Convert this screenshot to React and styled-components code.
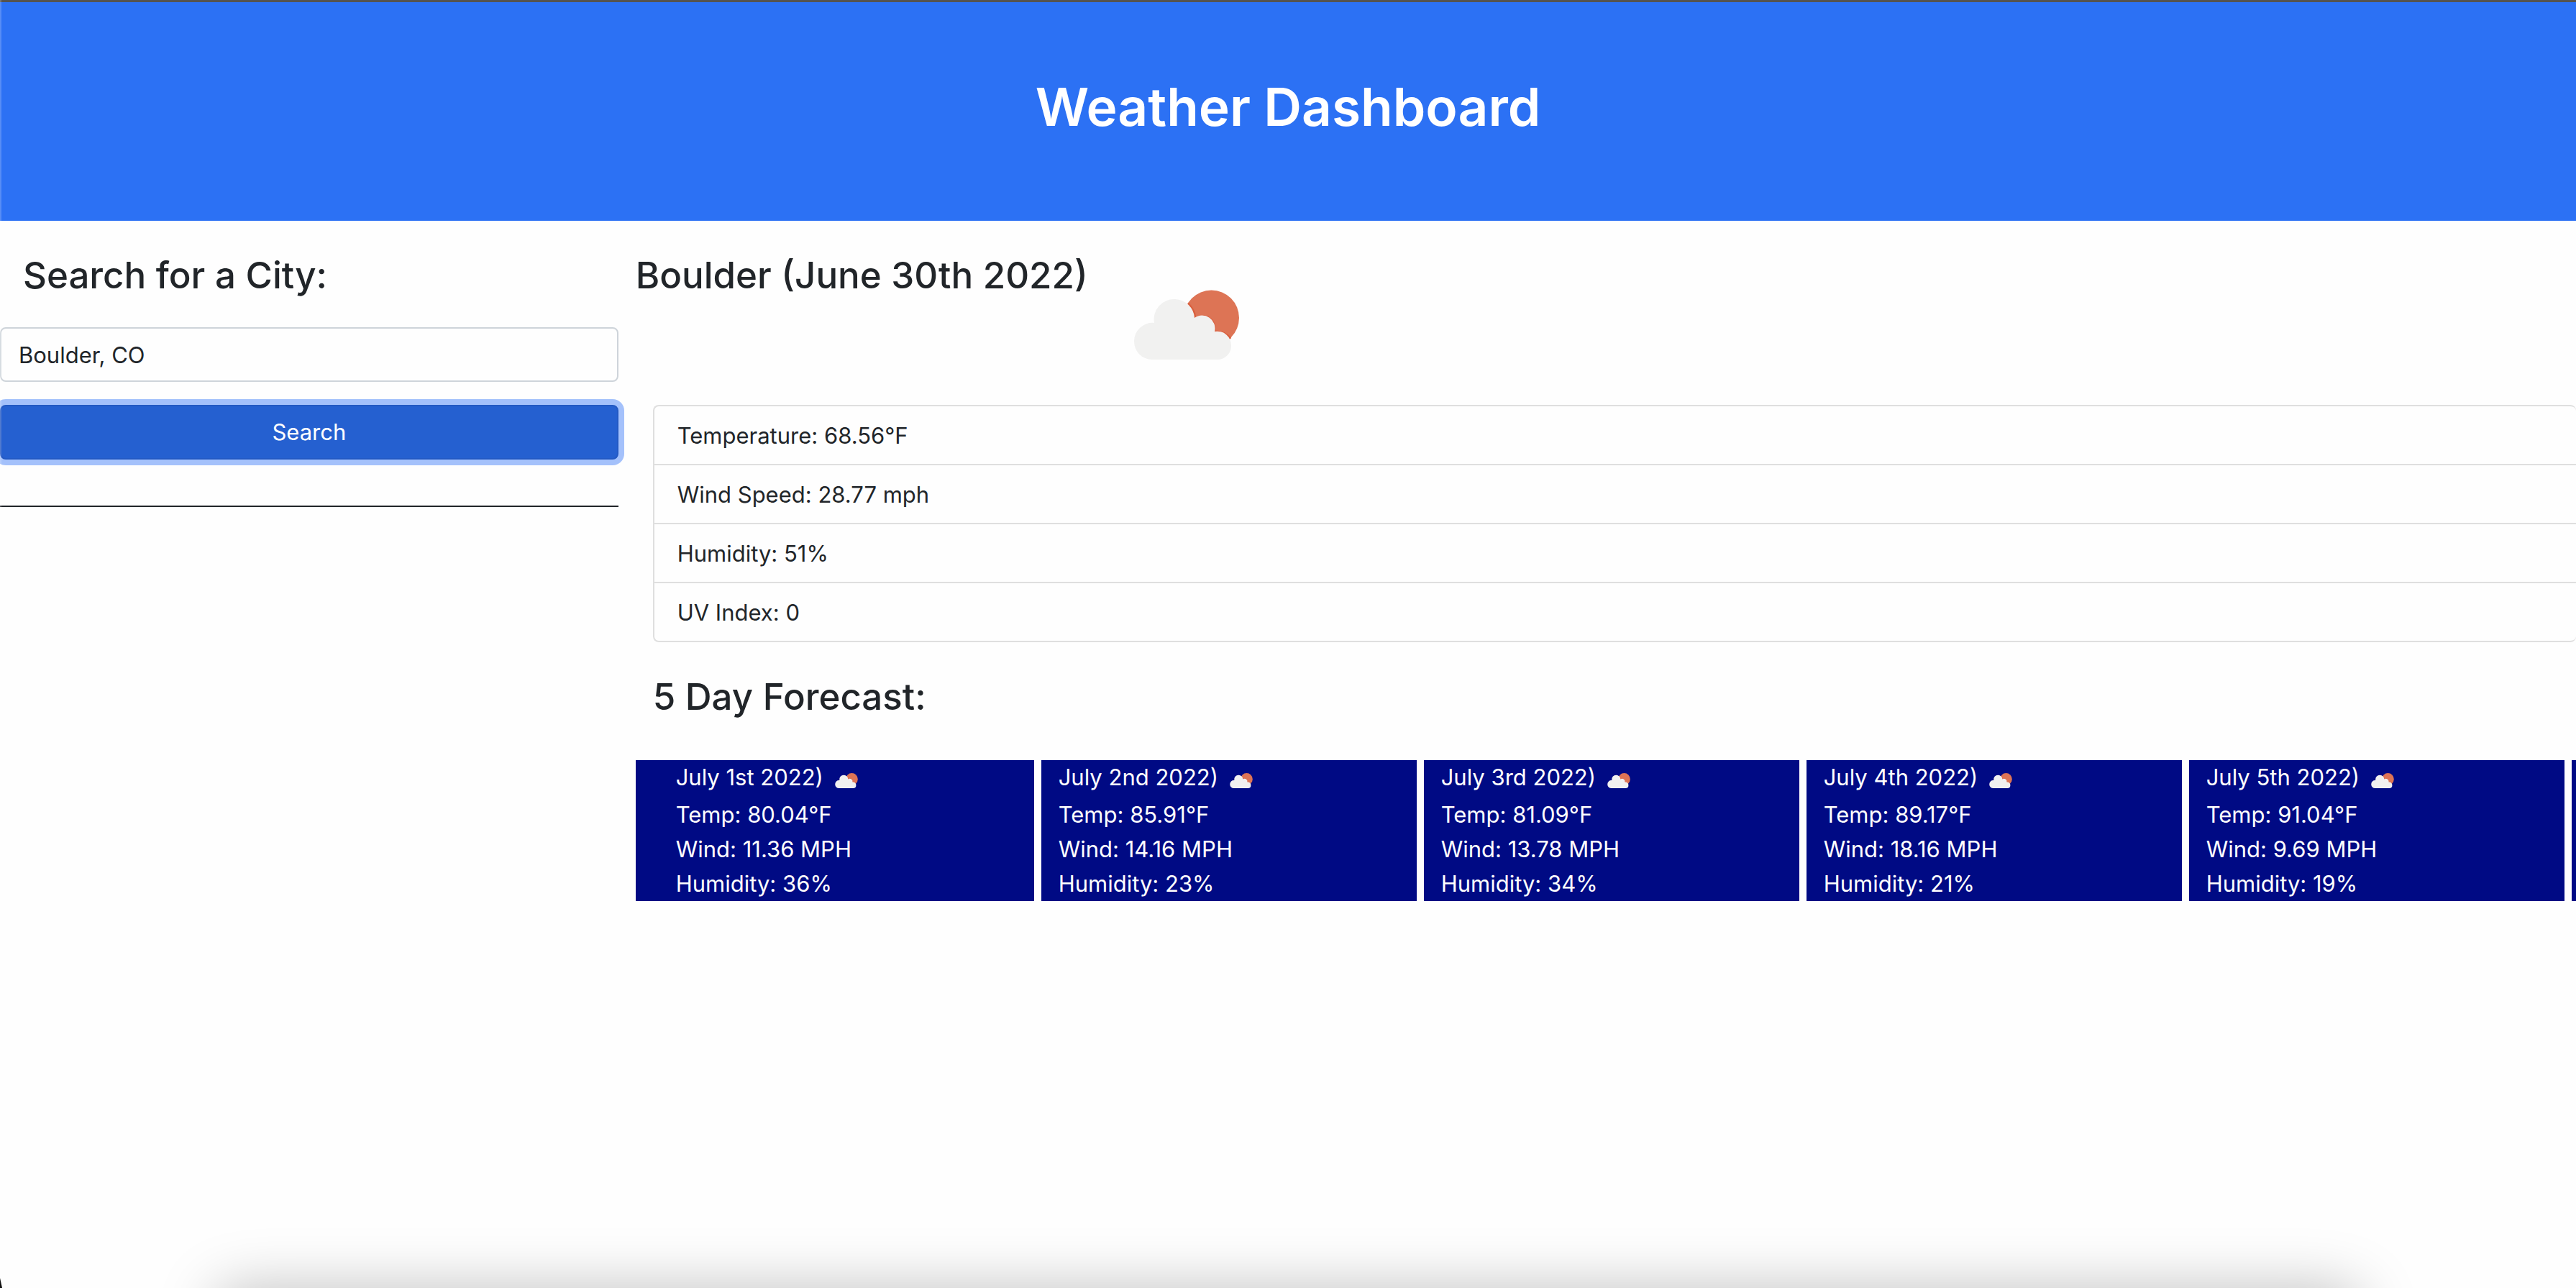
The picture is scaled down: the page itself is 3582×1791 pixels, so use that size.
import React from "react";
import styled, { createGlobalStyle } from "styled-components";

const GlobalStyle = createGlobalStyle`
  *, *::before, *::after { box-sizing: border-box; }
  body {
    margin: 0;
    overflow: hidden;
    background: #fefefe;
    color: #212529;
    font-family: Inter, "Liberation Sans", sans-serif;
    font-size: 31px;
    line-height: 48px;
  }
`;

const Header = styled.header`
  padding: 98px 32px 110px;
  border-top: 3px solid #55534f;
  background: #2c71f4;
  color: #fff;
  text-align: center;
`;

const Title = styled.h1`
  margin: 0;
  font-size: 73px;
  font-weight: 600;
  line-height: 96px;
`;

const Main = styled.main`
  display: grid;
  grid-template-columns: 24% minmax(0, 1fr);
  column-gap: 24px;
  padding-top: 40px;
`;

const Heading = styled.h2`
  margin: 0;
  padding-left: ${(p) => p.$inset || 0}px;
  font-size: 51px;
  font-weight: 500;
  line-height: 72px;
  white-space: nowrap;
`;

const SearchForm = styled.form`
  display: flex;
  flex-direction: column;
`;

const CityInput = styled.input`
  width: 100%;
  height: 76px;
  margin: 36px 0 32px;
  padding: 12px 24px;
  border: 2px solid #ced4da;
  border-radius: 8px;
  background: #fefefe;
  color: inherit;
  font: inherit;
`;

const SearchButton = styled.button`
  height: 76px;
  padding: 12px 24px;
  border: 2px solid #2359c3;
  border-radius: 8px;
  background: #2560d0;
  box-shadow: 0 0 0 8px #a4c1fb;
  color: #fff;
  font: inherit;
`;

const Divider = styled.hr`
  width: 100%;
  height: 2px;
  margin: 64px 0 0;
  border: 0;
  background: #212529;
`;

const Current = styled.div`
  display: flex;
  gap: 64px;
  height: 216px;
`;

const CurrentIcon = styled.svg`
  width: 146px;
  height: 97px;
  margin-top: 56px;
`;

const Conditions = styled.ul`
  margin: 0 0 40px 24px;
  padding: 0;
  border: 2px solid #dfdfdf;
  border-right: 0;
  border-radius: 8px;
  list-style: none;
`;

const Condition = styled.li`
  padding: 17px 32px 15px;

  & + & { border-top: 2px solid #dfdfdf; }
`;

const Forecast = styled.div`
  display: flex;
  gap: 10px;
  margin-top: 52px;
`;

const Day = styled.article`
  flex: none;
  width: 522px;
  padding-left: 24px;
  background: #000a84;
  color: #fff;

  &:first-child {
    width: 554px;
    padding-left: 56px;
  }
`;

const NextDay = styled.div`
  flex: 1;
  background: #000a84;
`;

const DayTitle = styled.h3`
  display: flex;
  gap: 16px;
  height: 52px;
  margin: 0;
  font: inherit;
`;

const DayIcon = styled.svg`
  width: 32px;
  height: 21px;
  margin-top: 18px;
`;

const Reading = styled.p`
  margin: 0;
`;

const WindowEdge = styled.div`
  position: fixed;
  inset: 0 auto 0 0;
  width: 2px;
  background: rgba(255, 255, 255, 0.2);
`;

const WindowCorner = styled.div`
  position: fixed;
  left: 0;
  bottom: 0;
  width: 3px;
  height: 14px;
  background: #111;
  clip-path: polygon(0 0, 100% 100%, 0 100%);
`;

const DockShadow = styled.div`
  position: fixed;
  right: 296px;
  bottom: -80px;
  left: 296px;
  height: 80px;
  border-radius: 40px;
  box-shadow: 0 0 80px rgba(0, 0, 0, 0.25);
`;

function CloudArt() {
  return (
    <>
      <circle cx="107.500" cy="39" r="38.500" fill="#dd7455" />
      <path
        d="M75 19 Q84 28 85 39 Q100 32 109 44 Q113 51 112 58 Q126 57 134 68"
        fill="none"
        stroke="#d95f3d"
        strokeWidth="3"
      />
      <path
        d="M25 97 A25 25 0 0 1 0 72 A25.500 25.500 0 0 1 28 46 A28 28 0 0 1 57 13 A28 28 0 0 1 84 39 A18 18 0 0 1 112 58 A19.500 19.500 0 0 1 135 78 A19 19 0 0 1 117 97 Z"
        fill="#f1f1f0"
      />
    </>
  );
}

const conditions = [
  "Temperature: 68.56°F",
  "Wind Speed: 28.77 mph",
  "Humidity: 51%",
  "UV Index: 0",
];

const days = [
  { date: "July 1st 2022)", temp: "80.04", wind: "11.36", humidity: 36 },
  { date: "July 2nd 2022)", temp: "85.91", wind: "14.16", humidity: 23 },
  { date: "July 3rd 2022)", temp: "81.09", wind: "13.78", humidity: 34 },
  { date: "July 4th 2022)", temp: "89.17", wind: "18.16", humidity: 21 },
  { date: "July 5th 2022)", temp: "91.04", wind: "9.69", humidity: 19 },
];

export default function App() {
  return (
    <>
      <GlobalStyle />
      <Header>
        <Title>Weather Dashboard</Title>
      </Header>
      <Main>
        <SearchForm onSubmit={(e) => e.preventDefault()}>
          <Heading $inset={32}>
            <label htmlFor="city">Search for a City:</label>
          </Heading>
          <CityInput id="city" type="text" defaultValue="Boulder, CO" />
          <SearchButton type="submit">Search</SearchButton>
          <Divider />
        </SearchForm>
        <section>
          <Current>
            <Heading>Boulder (June 30th 2022)</Heading>
            <CurrentIcon viewBox="0 0 146 97" aria-hidden="true">
              <CloudArt />
            </CurrentIcon>
          </Current>
          <Conditions>
            {conditions.map((text) => (
              <Condition key={text}>{text}</Condition>
            ))}
          </Conditions>
          <Heading $inset={24}>5 Day Forecast:</Heading>
          <Forecast>
            {days.map((day) => (
              <Day key={day.date}>
                <DayTitle>
                  {day.date}
                  <DayIcon viewBox="0 0 146 97" aria-hidden="true">
                    <CloudArt />
                  </DayIcon>
                </DayTitle>
                <Reading>Temp: {day.temp}°F</Reading>
                <Reading>Wind: {day.wind} MPH</Reading>
                <Reading>Humidity: {day.humidity}%</Reading>
              </Day>
            ))}
            <NextDay />
          </Forecast>
        </section>
      </Main>
      <WindowEdge />
      <WindowCorner />
      <DockShadow />
    </>
  );
}
